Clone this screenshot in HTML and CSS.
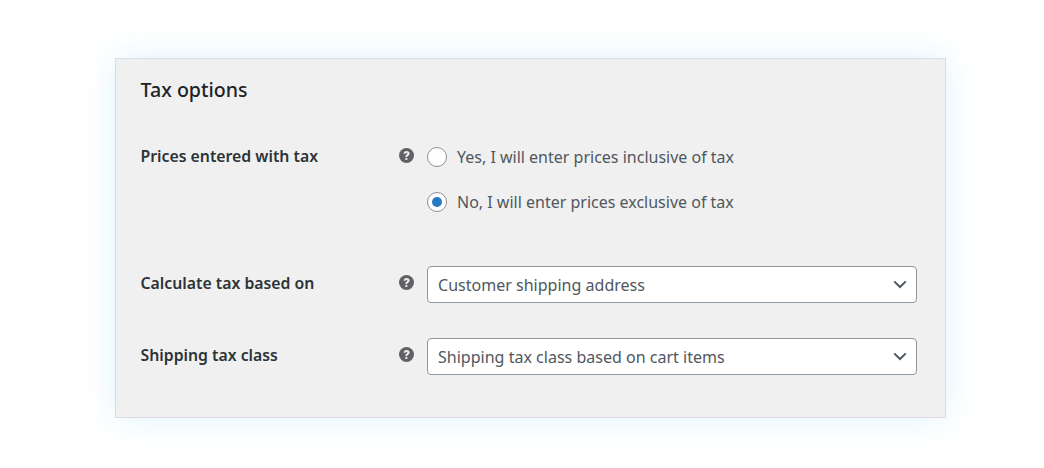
FILE: index.html
```html
<!DOCTYPE html>
<html lang="en">
<head>
  <meta charset="UTF-8">
  <title>Tax options</title>
  <link rel="stylesheet" href="styles.css">
</head>
<body>

<div class="panel">
  <h2 class="panel-title">Tax options</h2>

  <div class="row row-radios">
    <div class="row-label">Prices entered with tax</div>
    <svg class="help" viewBox="0 0 16 16"><circle cx="8" cy="8" r="8" fill="#5f6165"/><path d="M4.9 6.1C5 4.2 6.2 3.2 8.1 3.2c1.9 0 3.2 1.1 3.2 2.7 0 1.1-.6 1.8-1.5 2.4-.7.5-.9.7-.9 1.4H6.8c0-1.3.3-1.9 1.2-2.5.7-.5.9-.8.9-1.3 0-.6-.3-.9-.9-.9-.6 0-1 .4-1.1 1.1z" fill="#f0f0f0"/><rect x="6.8" y="10.6" width="2.1" height="2.1" fill="#f0f0f0"/></svg>
    <div class="radios">
      <div class="radio-line"><span class="radio"></span>Yes, I will enter prices inclusive of tax</div>
      <div class="radio-line"><span class="radio checked"></span>No, I will enter prices exclusive of tax</div>
    </div>
  </div>

  <div class="row row-first-select">
    <div class="row-label">Calculate tax based on</div>
    <svg class="help" viewBox="0 0 16 16"><circle cx="8" cy="8" r="8" fill="#5f6165"/><path d="M4.9 6.1C5 4.2 6.2 3.2 8.1 3.2c1.9 0 3.2 1.1 3.2 2.7 0 1.1-.6 1.8-1.5 2.4-.7.5-.9.7-.9 1.4H6.8c0-1.3.3-1.9 1.2-2.5.7-.5.9-.8.9-1.3 0-.6-.3-.9-.9-.9-.6 0-1 .4-1.1 1.1z" fill="#f0f0f0"/><rect x="6.8" y="10.6" width="2.1" height="2.1" fill="#f0f0f0"/></svg>
    <div class="select">Customer shipping address
      <svg class="chevron" viewBox="0 0 14 9"><path d="M1.2 1.4 7 7l5.8-5.6" fill="none" stroke="#50575e" stroke-width="2"/></svg>
    </div>
  </div>

  <div class="row row-select">
    <div class="row-label">Shipping tax class</div>
    <svg class="help" viewBox="0 0 16 16"><circle cx="8" cy="8" r="8" fill="#5f6165"/><path d="M4.9 6.1C5 4.2 6.2 3.2 8.1 3.2c1.9 0 3.2 1.1 3.2 2.7 0 1.1-.6 1.8-1.5 2.4-.7.5-.9.7-.9 1.4H6.8c0-1.3.3-1.9 1.2-2.5.7-.5.9-.8.9-1.3 0-.6-.3-.9-.9-.9-.6 0-1 .4-1.1 1.1z" fill="#f0f0f0"/><rect x="6.8" y="10.6" width="2.1" height="2.1" fill="#f0f0f0"/></svg>
    <div class="select">Shipping tax class based on cart items
      <svg class="chevron" viewBox="0 0 14 9"><path d="M1.2 1.4 7 7l5.8-5.6" fill="none" stroke="#50575e" stroke-width="2"/></svg>
    </div>
  </div>
</div>

</body>
</html>
```

FILE: styles.css
```css
body {
  margin: 0;
  background: #fff;
  font-family: 'Noto Sans', 'Open Sans', sans-serif;
  height: 468px;
  overflow: hidden;
  padding: 58px 0 0 115px;
  box-sizing: border-box;
}

.panel {
  width: 831px;
  height: 360px;
  box-sizing: border-box;
  background: #f0f0f0;
  border: 1px solid #dcdcde;
  box-shadow: 0 0 30px rgba(150, 215, 250, 0.3);
  padding: 17px 27px 0 25px;
}

.panel-title {
  margin: 0 0 0 -0.5px;
  font-size: 19.6px;
  line-height: 28px;
  font-weight: 500;
  color: #1d2327;
}

.row {
  display: flex;
  align-items: flex-start;
}

.row-radios {
  margin-top: 41px;
}

.row-first-select {
  margin-top: 36px;
}

.row-select {
  margin-top: 41px;
}

.row-label {
  width: 258.5px;
  margin-left: -0.5px;
  font-size: 15.8px;
  line-height: 22px;
  font-weight: 600;
  color: #2c3338;
}

.help {
  width: 15px;
  height: 15px;
  margin-top: 3px;
  flex: none;
}

.radios {
  margin-left: 14px;
  margin-top: 1px;
}

.radio-line {
  display: flex;
  align-items: center;
  height: 22px;
  margin-bottom: 23px;
  font-size: 16px;
  color: #50575e;
  white-space: nowrap;
}

.radio {
  width: 20px;
  height: 20px;
  box-sizing: border-box;
  border: 1.5px solid #8c8f94;
  border-radius: 50%;
  background: #fff;
  margin-right: 10px;
  margin-left: -1px;
  display: flex;
  align-items: center;
  justify-content: center;
}

.radio.checked::before {
  content: '';
  width: 10px;
  height: 10px;
  border-radius: 50%;
  background: #2679c4;
}

.select {
  margin-left: 13px;
  width: 490px;
  height: 37px;
  box-sizing: border-box;
  margin-top: -6px;
  border: 1.5px solid #8d98a1;
  border-radius: 4px;
  background: #fff;
  padding: 0 10px;
  display: flex;
  align-items: center;
  justify-content: space-between;
  font-size: 16.05px;
  color: #50575e;
}

.chevron {
  width: 14px;
  height: 9px;
  margin-right: -1px;
}
```
